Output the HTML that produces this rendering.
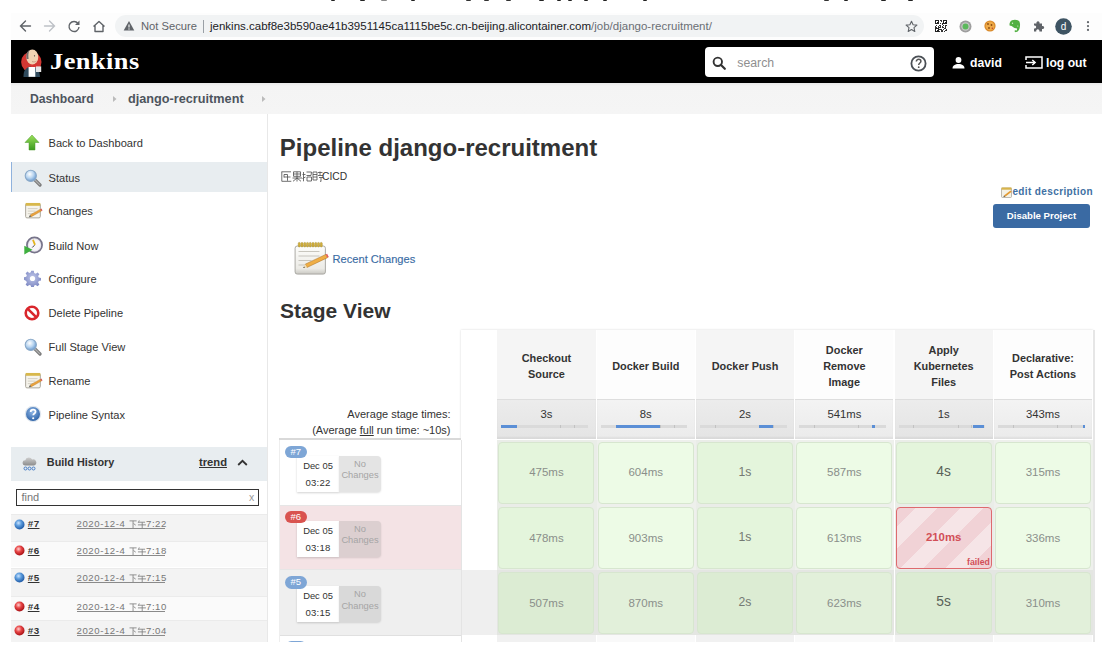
<!DOCTYPE html>
<html><head><meta charset="utf-8">
<style>
*{box-sizing:border-box;margin:0;padding:0}
html,body{width:1110px;height:663px;overflow:hidden;background:#fff;font-family:"Liberation Sans",sans-serif;color:#333}
.a{position:absolute}
.nw{white-space:nowrap}
#chrome{left:11px;top:13px;width:1091px;height:27px;background:#fdfdfd}
#omni{left:115px;top:15px;width:809px;height:22px;border-radius:11px;background:#f1f3f4}
#hdr{left:11px;top:40px;width:1091px;height:43px;background:#000}
#bc{left:11px;top:83px;width:1091px;height:31px;background:linear-gradient(#e9e9e9,#f4f4f4 3px,#f5f5f5)}
#side{left:11px;top:114px;width:257px;height:528px;background:#fff;border-right:1px solid #e8e8e8}
.si{position:absolute;left:11px;width:256px;height:30px;font-size:11px;color:#333}
.si span{position:absolute;left:37px;top:9px;white-space:nowrap}
.si svg{position:absolute;left:14px;top:7px}
</style></head><body>
<!-- top cut-off title marks -->
<div class="a" style="left:330.5px;top:0;width:4px;height:1.3px;background:#222;border-radius:0 0 1px 1px"></div>
<div class="a" style="left:359.5px;top:0;width:5px;height:1.3px;background:#222;border-radius:0 0 1px 1px"></div>
<div class="a" style="left:380.5px;top:0;width:6px;height:1.3px;background:#888;border-radius:0 0 1px 1px"></div>
<div class="a" style="left:411px;top:0;width:4px;height:1.3px;background:#222;border-radius:0 0 1px 1px"></div>
<div class="a" style="left:465.5px;top:0;width:5px;height:1.3px;background:#333;border-radius:0 0 1px 1px"></div>
<div class="a" style="left:483.5px;top:0;width:5px;height:1.3px;background:#333;border-radius:0 0 1px 1px"></div>
<div class="a" style="left:505.5px;top:0;width:5px;height:1.3px;background:#333;border-radius:0 0 1px 1px"></div>
<div class="a" style="left:538.5px;top:0;width:5px;height:1.3px;background:#222;border-radius:0 0 1px 1px"></div>
<div class="a" style="left:557px;top:0;width:4px;height:1.3px;background:#222;border-radius:0 0 1px 1px"></div>
<div class="a" style="left:568px;top:0;width:4px;height:1.3px;background:#222;border-radius:0 0 1px 1px"></div>
<div class="a" style="left:584px;top:0;width:4px;height:1.3px;background:#222;border-radius:0 0 1px 1px"></div>
<div class="a" style="left:603px;top:0;width:4px;height:1.3px;background:#222;border-radius:0 0 1px 1px"></div>
<div class="a" style="left:643px;top:0;width:4px;height:1.3px;background:#222;border-radius:0 0 1px 1px"></div>
<div class="a" style="left:824px;top:0;width:5px;height:1.3px;background:#333;border-radius:0 0 1px 1px"></div>
<div class="a" style="left:844px;top:0;width:4px;height:1.3px;background:#222;border-radius:0 0 1px 1px"></div>
<div class="a" style="left:881px;top:0;width:5px;height:1.3px;background:#222;border-radius:0 0 1px 1px"></div>
<div class="a" style="left:908px;top:0;width:5px;height:1.3px;background:#222;border-radius:0 0 1px 1px"></div>
<!-- browser chrome -->
<div class="a" id="chrome"></div>
<svg class="a" style="left:11px;top:13px" width="110" height="27" viewBox="0 0 110 27">
 <g fill="none" stroke="#5f6368" stroke-width="1.4" stroke-linecap="round">
  <path d="M9.5 13h10M14.5 8l-5 5 5 5"/>
 </g>
 <g fill="none" stroke="#bdc1c6" stroke-width="1.4" stroke-linecap="round">
  <path d="M33.5 13h10M38.5 8l5 5-5 5"/>
 </g>
 <g fill="none" stroke="#5f6368" stroke-width="1.4">
  <path d="M67 10.5A5 5 0 1 0 68 14"/>
 </g>
 <path d="M68.5 7.5v4.5h-4.5z" fill="#5f6368"/>
 <g fill="none" stroke="#5f6368" stroke-width="1.4" stroke-linejoin="round">
  <path d="M82.5 13.5l5.5-5 5.5 5M84 12.5v6h8v-6"/>
 </g>
</svg>
<div class="a" id="omni"></div>
<svg class="a" style="left:123px;top:20px" width="12" height="12" viewBox="0 0 12 12"><path d="M6 1L11.3 10.5H0.7z" fill="#5f6368"/><path d="M6 4.5v3" stroke="#f1f3f4" stroke-width="1.2"/><circle cx="6" cy="9" r="0.7" fill="#f1f3f4"/></svg>
<div class="a nw" style="left:141px;top:19px;font-size:11.2px;color:#5f6368;line-height:14px">Not Secure</div>
<div class="a" style="left:203px;top:20px;width:1px;height:13px;background:#9aa0a6"></div>
<div class="a nw" style="left:210px;top:19px;font-size:11.5px;color:#202124;line-height:14px">jenkins.cabf8e3b590ae41b3951145ca1115be5c.cn-beijing.alicontainer.com<span style="color:#6b6f74">/job/django-recruitment/</span></div>
<svg class="a" style="left:905px;top:20px" width="13" height="13" viewBox="0 0 13 13"><path d="M6.5 1.2l1.6 3.5 3.8.4-2.9 2.6.8 3.8-3.3-1.9-3.3 1.9.8-3.8L1.1 5.1l3.8-.4z" fill="none" stroke="#5f6368" stroke-width="1.1" stroke-linejoin="round"/></svg>
<!-- QR -->
<svg class="a" style="left:935px;top:20px" width="12" height="12" viewBox="0 0 12 12" shape-rendering="crispEdges"><rect width="12" height="12" fill="#fff"/><path d="M0 0h1v1h-1zM1 0h1v1h-1zM2 0h1v1h-1zM5 0h1v1h-1zM6 0h1v1h-1zM8 0h1v1h-1zM9 0h1v1h-1zM11 0h1v1h-1zM1 1h1v1h-1zM3 1h1v1h-1zM6 1h1v1h-1zM9 1h1v1h-1zM0 2h1v1h-1zM1 2h1v1h-1zM3 2h1v1h-1zM8 2h1v1h-1zM10 2h1v1h-1zM1 3h1v1h-1zM2 3h1v1h-1zM3 3h1v1h-1zM5 3h1v1h-1zM7 3h1v1h-1zM8 3h1v1h-1zM9 3h1v1h-1zM10 3h1v1h-1zM7 4h1v1h-1zM1 5h1v1h-1zM4 5h1v1h-1zM5 5h1v1h-1zM8 5h1v1h-1zM10 5h1v1h-1zM11 5h1v1h-1zM0 6h1v1h-1zM3 6h1v1h-1zM5 6h1v1h-1zM7 6h1v1h-1zM10 6h1v1h-1zM0 7h1v1h-1zM1 7h1v1h-1zM3 7h1v1h-1zM4 7h1v1h-1zM5 7h1v1h-1zM7 7h1v1h-1zM8 7h1v1h-1zM10 7h1v1h-1zM1 8h1v1h-1zM2 8h1v1h-1zM3 8h1v1h-1zM9 8h1v1h-1zM10 8h1v1h-1zM0 9h1v1h-1zM1 9h1v1h-1zM3 9h1v1h-1zM4 9h1v1h-1zM5 9h1v1h-1zM6 9h1v1h-1zM8 9h1v1h-1zM11 9h1v1h-1zM1 10h1v1h-1zM3 10h1v1h-1zM6 10h1v1h-1zM7 10h1v1h-1zM10 10h1v1h-1zM11 10h1v1h-1zM1 11h1v1h-1zM2 11h1v1h-1zM3 11h1v1h-1zM4 11h1v1h-1zM6 11h1v1h-1zM7 11h1v1h-1zM9 11h1v1h-1z" fill="#333"/><path d="M0 0h4v4h-4zM8 0h4v4h-4zM0 8h4v4h-4z" fill="#222"/><path d="M1 1h2v2h-2zM9 1h2v2h-2zM1 9h2v2h-2z" fill="#fff"/><path d="M1.5 1.5h1v1h-1zM9.5 1.5h1v1h-1zM1.5 9.5h1v1h-1z" fill="#222"/></svg>
<svg class="a" style="left:959px;top:20px" width="13" height="13" viewBox="0 0 13 13"><circle cx="6.5" cy="6.5" r="6" fill="#9e9e9e"/><circle cx="6.5" cy="6.5" r="4.2" fill="#c8c8c8"/><circle cx="6.5" cy="6.5" r="3" fill="#5cb85c"/></svg>
<svg class="a" style="left:984px;top:20px" width="12" height="12" viewBox="0 0 12 12"><circle cx="6" cy="6" r="5.6" fill="#d98a2b"/><circle cx="6" cy="6" r="4.4" fill="#eeaa48"/><circle cx="4" cy="4" r="0.9" fill="#8a4b12"/><circle cx="7.5" cy="5" r="0.9" fill="#8a4b12"/><circle cx="5" cy="8" r="0.9" fill="#8a4b12"/><circle cx="8.3" cy="8.2" r="0.7" fill="#c0392b"/></svg>
<svg class="a" style="left:1008px;top:19px" width="13" height="14" viewBox="0 0 13 14"><path d="M4 1.2c2.5-1 5.5-.6 7 .8 1.4 1.6 1.2 5 .6 7.2-.5 2-1.8 3.6-3.4 3.9-1.3.2-2-.8-1.4-1.6.6-.7 1.6-.3 1.5.3.8-.6 1-1.8.3-2.5-1.2.2-2.5-.2-3.3-1C3.5 6.8 2.8 6.6 1.8 6.8 1 5 1.8 2.4 4 1.2z" fill="#52b043"/><circle cx="4.5" cy="4.3" r="0.7" fill="#d8f0d0"/><circle cx="9.8" cy="7" r="0.6" fill="#d8f0d0"/></svg>
<svg class="a" style="left:1033px;top:20px" width="12" height="12" viewBox="0 0 12 12"><path d="M1 3.5h2.5a1.6 1.6 0 1 1 3 0H9V6a1.6 1.6 0 1 1 0 3v2.5H6.3a1.6 1.6 0 1 0-3 0H1V8.5a1.6 1.6 0 1 0 0-3z" fill="#5f6368"/></svg>
<svg class="a" style="left:1055px;top:18px" width="17" height="17" viewBox="0 0 17 17"><circle cx="8.5" cy="8.5" r="8.3" fill="#3e5463"/><text x="8.5" y="12" text-anchor="middle" font-family="Liberation Sans" font-size="10" fill="#fff">d</text></svg>
<svg class="a" style="left:1086px;top:20px" width="4" height="13" viewBox="0 0 4 13"><circle cx="2" cy="2.2" r="1.1" fill="#5f6368"/><circle cx="2" cy="6.1" r="1.1" fill="#5f6368"/><circle cx="2" cy="9.9" r="1.1" fill="#5f6368"/></svg>

<!-- Jenkins header -->
<div class="a" id="hdr"></div>
<svg class="a" style="left:19px;top:48px" width="24" height="29" viewBox="0 0 24 29">
 <circle cx="12.3" cy="14" r="10.2" fill="#d33833"/>
 <path d="M4.5 29c0-5 .8-9.5 8-10.5 7 .5 8 5 8.5 10.5z" fill="#2f4a5c"/>
 <path d="M12 16.5l3 2.2 2.6-2.4-.4 3.2-2.4-.6-2.6 1z" fill="#e03a35"/>
 <ellipse cx="13.3" cy="9" rx="6" ry="7.6" fill="#f1d3b3"/>
 <path d="M7.6 11c-.6-4 0-7.6 3-9-1.3 2.5-1.5 5.5-1 9z" fill="#6f6a6b"/>
 <path d="M13 13.5c1.5.7 3.2.6 4.3-.3" stroke="#b88e72" stroke-width="0.7" fill="none"/>
 <circle cx="15.5" cy="7.8" r="0.6" fill="#333"/>
 <path d="M9.6 19h6.7v9.8H9.6z" fill="#fff"/>
 <path d="M17 18.4h5.2v5.6H17z" fill="#e6e6e6"/>
</svg>
<div class="a nw" style="left:50.3px;top:49.5px;font-family:'Liberation Serif',serif;font-weight:bold;font-size:22.5px;line-height:24px;color:#fff;letter-spacing:0.4px;transform:scaleX(1.17);transform-origin:0 0">Jenkins</div>
<div class="a" style="left:705px;top:47px;width:229px;height:30px;background:#fff;border-radius:4px"></div>
<svg class="a" style="left:712px;top:56px" width="15" height="14" viewBox="0 0 15 14"><circle cx="5.8" cy="5.8" r="4.2" fill="none" stroke="#333" stroke-width="1.9"/><path d="M8.8 8.8l4 4" stroke="#333" stroke-width="2.2" stroke-linecap="round"/></svg>
<div class="a nw" style="left:737.3px;top:56px;font-size:12.3px;color:#8f8f8f;line-height:15px">search</div>
<svg class="a" style="left:910px;top:55px" width="17" height="17" viewBox="0 0 17 17"><circle cx="8.5" cy="8.5" r="7.1" fill="none" stroke="#4a4f55" stroke-width="1.8"/><path d="M6.3 6.6c0-1.4 1-2.3 2.3-2.3s2.3.9 2.3 2.1c0 1.6-2.2 1.7-2.2 3.5" fill="none" stroke="#555" stroke-width="1.5"/><circle cx="8.7" cy="12.2" r="0.9" fill="#555"/></svg>
<svg class="a" style="left:952px;top:57px" width="13" height="12" viewBox="0 0 13 12"><circle cx="6.5" cy="3" r="2.9" fill="#fff"/><path d="M0.5 11.5c0-3 2.5-4.6 6-4.6s6 1.6 6 4.6z" fill="#fff"/></svg>
<div class="a nw" style="left:970px;top:56px;font-size:12.2px;font-weight:bold;color:#fff;line-height:15px">david</div>
<svg class="a" style="left:1025px;top:56px" width="18" height="13" viewBox="0 0 18 13"><path d="M1 4V1h16v11H1V9" fill="none" stroke="#fff" stroke-width="1.5"/><path d="M1 6.5h8.5" stroke="#fff" stroke-width="1.5"/><path d="M7.3 4l2.8 2.5-2.8 2.5" fill="none" stroke="#fff" stroke-width="1.5"/></svg>
<div class="a nw" style="left:1046px;top:56px;font-size:12.2px;font-weight:bold;color:#fff;line-height:15px">log out</div>

<!-- breadcrumb -->
<div class="a" id="bc"></div>
<div class="a nw" style="left:30px;top:92px;font-size:12.2px;font-weight:bold;color:#4d545d;line-height:15px">Dashboard</div>
<svg class="a" style="left:113px;top:96px" width="4" height="6"><path d="M0 0l3.5 3L0 6z" fill="#bbb"/></svg>
<div class="a nw" style="left:128px;top:92px;font-size:12.7px;font-weight:bold;color:#4d545d;line-height:15px">django-recruitment</div>
<svg class="a" style="left:262px;top:96px" width="4" height="6"><path d="M0 0l3.5 3L0 6z" fill="#bbb"/></svg>

<!-- sidebar -->
<div class="a" id="side"></div>
<div class="a" style="left:11px;top:162px;width:256px;height:30px;background:#e8edf0;border-left:1.5px solid #8fb2dd"></div>
<div class="a" style="left:24px;top:133.7px;line-height:0"><svg width="16" height="17" viewBox="0 0 16 17"><defs><linearGradient id="ug" x1="0" y1="0" x2="0" y2="1"><stop offset="0" stop-color="#9be05a"/><stop offset="1" stop-color="#3b9a20"/></linearGradient></defs><path d="M8 1L1 8.5h4V16h6V8.5h4z" fill="url(#ug)" stroke="#4c9a2a" stroke-width="0.5"/></svg></div>
<div class="a nw" style="left:48.5px;top:137.4px;font-size:11.1px;line-height:12px;color:#333">Back to Dashboard</div>
<div class="a" style="left:24px;top:168.5px;line-height:0"><svg width="18" height="18" viewBox="0 0 18 18"><defs><radialGradient id="mg1" cx="40%" cy="35%" r="70%"><stop offset="0" stop-color="#ffffff"/><stop offset="0.5" stop-color="#b9d5f0"/><stop offset="1" stop-color="#5b8fc9"/></radialGradient></defs>
<path d="M10.5 10.5l5.5 5.5" stroke="#7a7a7a" stroke-width="3.2" stroke-linecap="round"/><path d="M10.5 10.5l5.2 5.2" stroke="#b0b0b0" stroke-width="1.2" stroke-linecap="round"/>
<circle cx="6.8" cy="6.8" r="5.6" fill="url(#mg1)" stroke="#8aa9c8" stroke-width="1.1"/></svg></div>
<div class="a nw" style="left:48.5px;top:172.2px;font-size:11.1px;line-height:12px;color:#333">Status</div>
<div class="a" style="left:24px;top:201.1px;line-height:0"><svg width="18.5" height="18.5" viewBox="0 0 17 17"><rect x="1.5" y="2.5" width="13.5" height="13" rx="1.2" fill="#f6f4ec" stroke="#a9a59a" stroke-width="0.9"/>
<rect x="1.5" y="1.8" width="13.5" height="2.6" fill="#d8b84c"/><path d="M3.5 7h9M3.5 9.3h7M3.5 11.6h5" stroke="#cfcabd" stroke-width="0.8"/>
<path d="M5.5 12.8l9.5-5.3 1 1.8-9.5 5.3z" fill="#e9a23b" stroke="#a86c1f" stroke-width="0.3"/><path d="M5.5 12.8l-1 2.1 2-.3z" fill="#555"/><path d="M15 7.5l1 1.8 1-.6-1-1.8z" fill="#d9534f"/></svg></div>
<div class="a nw" style="left:48.5px;top:204.8px;font-size:11.1px;line-height:12px;color:#333">Changes</div>
<div class="a" style="left:24px;top:236.1px;line-height:0"><svg width="19" height="19" viewBox="0 0 19 19"><circle cx="10.5" cy="9" r="7.6" fill="#e9e7ef" stroke="#77748a" stroke-width="1.7"/><circle cx="10.5" cy="9" r="5.6" fill="#f7f6fa"/><path d="M10.5 9.2l-2.2 2.3" stroke="#444" stroke-width="1"/><path d="M9 3.8l2 5" stroke="#e3b51e" stroke-width="1.8"/><path d="M0.3 9.8l8.2 4-8.2 4.6z" fill="#3fb03f"/></svg></div>
<div class="a nw" style="left:48.5px;top:239.8px;font-size:11.1px;line-height:12px;color:#333">Build Now</div>
<div class="a" style="left:24px;top:269.5px;line-height:0"><svg width="17" height="17" viewBox="0 0 17 17"><defs><radialGradient id="gg" cx="50%" cy="40%" r="60%"><stop offset="0" stop-color="#c0c7ea"/><stop offset="1" stop-color="#7d88c2"/></radialGradient></defs><path d="M7.2 0.8h2.6l.4 2.2 1.5.7 1.9-1.3 1.8 1.8-1.3 1.9.7 1.5 2.2.4v2.6l-2.2.4-.7 1.5 1.3 1.9-1.8 1.8-1.9-1.3-1.5.7-.4 2.2H7.2l-.4-2.2-1.5-.7-1.9 1.3-1.8-1.8 1.3-1.9-.7-1.5L0 9.8V7.2l2.2-.4.7-1.5-1.3-1.9 1.8-1.8 1.9 1.3 1.5-.7z" fill="url(#gg)"/><circle cx="8.5" cy="8.5" r="2.6" fill="#fff"/></svg></div>
<div class="a nw" style="left:48.5px;top:273.2px;font-size:11.1px;line-height:12px;color:#333">Configure</div>
<div class="a" style="left:24px;top:303.1px;line-height:0"><svg width="16" height="16" viewBox="0 0 16 16" style="margin-top:1.5px"><circle cx="8" cy="8" r="6.3" fill="#fff" stroke="#d9262c" stroke-width="2.6"/><path d="M3.8 3.8l8.4 8.4" stroke="#d9262c" stroke-width="2.6"/></svg></div>
<div class="a nw" style="left:48.5px;top:306.8px;font-size:11.1px;line-height:12px;color:#333">Delete Pipeline</div>
<div class="a" style="left:24px;top:337.5px;line-height:0"><svg width="18" height="18" viewBox="0 0 18 18"><defs><radialGradient id="mg2" cx="40%" cy="35%" r="70%"><stop offset="0" stop-color="#ffffff"/><stop offset="0.5" stop-color="#b9d5f0"/><stop offset="1" stop-color="#5b8fc9"/></radialGradient></defs>
<path d="M10.5 10.5l5.5 5.5" stroke="#7a7a7a" stroke-width="3.2" stroke-linecap="round"/><path d="M10.5 10.5l5.2 5.2" stroke="#b0b0b0" stroke-width="1.2" stroke-linecap="round"/>
<circle cx="6.8" cy="6.8" r="5.6" fill="url(#mg2)" stroke="#8aa9c8" stroke-width="1.1"/></svg></div>
<div class="a nw" style="left:48.5px;top:341.2px;font-size:11.1px;line-height:12px;color:#333">Full Stage View</div>
<div class="a" style="left:24px;top:371.1px;line-height:0"><svg width="18.5" height="18.5" viewBox="0 0 17 17"><rect x="1.5" y="2.5" width="13.5" height="13" rx="1.2" fill="#f6f4ec" stroke="#a9a59a" stroke-width="0.9"/>
<rect x="1.5" y="1.8" width="13.5" height="2.6" fill="#d8b84c"/><path d="M3.5 7h9M3.5 9.3h7M3.5 11.6h5" stroke="#cfcabd" stroke-width="0.8"/>
<path d="M5.5 12.8l9.5-5.3 1 1.8-9.5 5.3z" fill="#e9a23b" stroke="#a86c1f" stroke-width="0.3"/><path d="M5.5 12.8l-1 2.1 2-.3z" fill="#555"/><path d="M15 7.5l1 1.8 1-.6-1-1.8z" fill="#d9534f"/></svg></div>
<div class="a nw" style="left:48.5px;top:374.8px;font-size:11.1px;line-height:12px;color:#333">Rename</div>
<div class="a" style="left:24px;top:405.1px;line-height:0"><svg width="18" height="18" viewBox="0 0 17 17" style="margin-left:-0.5px"><defs><radialGradient id="hg" cx="45%" cy="35%" r="65%"><stop offset="0" stop-color="#8fb6e6"/><stop offset="1" stop-color="#2f64a8"/></radialGradient></defs><circle cx="8.5" cy="8.5" r="7.8" fill="#dfe6ee"/><circle cx="8.5" cy="8.5" r="6.6" fill="url(#hg)"/><path d="M6.3 6.6c0-1.4 1-2.3 2.3-2.3s2.3.9 2.3 2.1c0 1.6-2.2 1.7-2.2 3.3" fill="none" stroke="#fff" stroke-width="1.7"/><circle cx="8.7" cy="12.5" r="1" fill="#fff"/></svg></div>
<div class="a nw" style="left:48.5px;top:408.8px;font-size:11.1px;line-height:12px;color:#333">Pipeline Syntax</div>
<div class="a" style="left:11px;top:447px;width:256px;height:34px;background:#e8edf0"></div>
<svg class="a" style="left:22px;top:456px" width="15" height="15" viewBox="0 0 15 15"><defs><linearGradient id="cg" x1="0" y1="0" x2="0" y2="1"><stop offset="0" stop-color="#d0d0d0"/><stop offset="1" stop-color="#8c8c8c"/></linearGradient></defs><path d="M3 9.5a2.6 2.6 0 0 1 .3-5.2 3.6 3.6 0 0 1 6.8-.8 2.8 2.8 0 0 1 2 6z" fill="url(#cg)"/><g fill="none" stroke="#4a7ec4" stroke-width="1"><circle cx="3.5" cy="12.5" r="1.5"/><circle cx="7.5" cy="12.5" r="1.5"/><circle cx="11.5" cy="12.5" r="1.5"/></g></svg>
<div class="a nw" style="left:46.8px;top:456.3px;font-size:10.85px;font-weight:bold;line-height:12px;color:#333">Build History</div>
<div class="a nw" style="left:199px;top:456.3px;font-size:11.2px;font-weight:bold;line-height:12px;color:#333;text-decoration:underline">trend</div>
<svg class="a" style="left:237px;top:459px" width="11" height="7" viewBox="0 0 11 7"><path d="M1.2 6L5.5 1.8 9.8 6" fill="none" stroke="#333" stroke-width="1.8"/></svg>
<div class="a" style="left:16px;top:488.5px;width:243px;height:17px;border:1.5px solid #333;background:#fff"></div>
<div class="a nw" style="left:21.5px;top:491px;font-size:11px;line-height:12px;color:#777">find</div>
<div class="a nw" style="left:249px;top:490.5px;font-size:10.5px;line-height:12px;color:#999">x</div>
<div class="a" style="left:11px;top:513.7px;width:256px;height:26.9px;background:#f3f3f3;border-top:1px solid #ebebeb"></div>
<svg class="a" style="left:13.5px;top:518.5px" width="11" height="11" viewBox="0 0 11 11"><defs><radialGradient id="b7" cx="40%" cy="35%" r="65%"><stop offset="0" stop-color="#c9e3ff"/><stop offset="0.45" stop-color="#5b9bdc"/><stop offset="1" stop-color="#1f5aa6"/></radialGradient></defs><circle cx="5.5" cy="5.5" r="5" fill="url(#b7)"/></svg>
<div class="a nw" style="left:27.8px;top:518.1px;font-size:9.8px;font-weight:bold;line-height:12px;color:#333;letter-spacing:0.4px;text-decoration:underline">#7</div>
<div class="a nw" style="left:76.6px;top:517.9px;font-size:9.6px;letter-spacing:0.55px;line-height:12px;color:#777">2020-12-4 </div>
<div class="a nw" style="left:146.1px;top:517.9px;font-size:9.6px;letter-spacing:0.5px;line-height:12px;color:#777">7:22</div>
<div class="a" style="left:76.6px;top:528.2px;width:88.6px;height:1px;background:#8a8a8a"></div>
<svg class="a" style="left:127.8px;top:520.2px" width="19" height="8" viewBox="0 0 20 9"><g stroke="#7a7a7a" stroke-width="0.9" fill="none"><path d="M1 1h8M5 1v8.5M5.5 4l2.5 1.8"/><path d="M12 0.5l-1.2 2.8M11.5 2.5h7M10.5 5.5h9M15.3 2.5v7"/></g></svg>
<div class="a" style="left:11px;top:540.6px;width:256px;height:26.9px;background:#fafafa;border-top:1px solid #ebebeb"></div>
<svg class="a" style="left:13.5px;top:545.4px" width="11" height="11" viewBox="0 0 11 11"><defs><radialGradient id="b6" cx="40%" cy="35%" r="65%"><stop offset="0" stop-color="#ffd0d0"/><stop offset="0.45" stop-color="#e84646"/><stop offset="1" stop-color="#a80f14"/></radialGradient></defs><circle cx="5.5" cy="5.5" r="5" fill="url(#b6)"/></svg>
<div class="a nw" style="left:27.8px;top:545.0px;font-size:9.8px;font-weight:bold;line-height:12px;color:#333;letter-spacing:0.4px;text-decoration:underline">#6</div>
<div class="a nw" style="left:76.6px;top:544.8px;font-size:9.6px;letter-spacing:0.55px;line-height:12px;color:#777">2020-12-4 </div>
<div class="a nw" style="left:146.1px;top:544.8px;font-size:9.6px;letter-spacing:0.5px;line-height:12px;color:#777">7:18</div>
<div class="a" style="left:76.6px;top:555.1px;width:88.6px;height:1px;background:#8a8a8a"></div>
<svg class="a" style="left:127.8px;top:547.1px" width="19" height="8" viewBox="0 0 20 9"><g stroke="#7a7a7a" stroke-width="0.9" fill="none"><path d="M1 1h8M5 1v8.5M5.5 4l2.5 1.8"/><path d="M12 0.5l-1.2 2.8M11.5 2.5h7M10.5 5.5h9M15.3 2.5v7"/></g></svg>
<div class="a" style="left:11px;top:567.5px;width:256px;height:28.8px;background:#f3f3f3;border-top:1px solid #ebebeb"></div>
<svg class="a" style="left:13.5px;top:572.3px" width="11" height="11" viewBox="0 0 11 11"><defs><radialGradient id="b5" cx="40%" cy="35%" r="65%"><stop offset="0" stop-color="#c9e3ff"/><stop offset="0.45" stop-color="#5b9bdc"/><stop offset="1" stop-color="#1f5aa6"/></radialGradient></defs><circle cx="5.5" cy="5.5" r="5" fill="url(#b5)"/></svg>
<div class="a nw" style="left:27.8px;top:571.9px;font-size:9.8px;font-weight:bold;line-height:12px;color:#333;letter-spacing:0.4px;text-decoration:underline">#5</div>
<div class="a nw" style="left:76.6px;top:571.7px;font-size:9.6px;letter-spacing:0.55px;line-height:12px;color:#777">2020-12-4 </div>
<div class="a nw" style="left:146.1px;top:571.7px;font-size:9.6px;letter-spacing:0.5px;line-height:12px;color:#777">7:15</div>
<div class="a" style="left:76.6px;top:582.0px;width:88.6px;height:1px;background:#8a8a8a"></div>
<svg class="a" style="left:127.8px;top:574.0px" width="19" height="8" viewBox="0 0 20 9"><g stroke="#7a7a7a" stroke-width="0.9" fill="none"><path d="M1 1h8M5 1v8.5M5.5 4l2.5 1.8"/><path d="M12 0.5l-1.2 2.8M11.5 2.5h7M10.5 5.5h9M15.3 2.5v7"/></g></svg>
<div class="a" style="left:11px;top:596.3px;width:256px;height:24.1px;background:#fafafa;border-top:1px solid #ebebeb"></div>
<svg class="a" style="left:13.5px;top:601.1px" width="11" height="11" viewBox="0 0 11 11"><defs><radialGradient id="b4" cx="40%" cy="35%" r="65%"><stop offset="0" stop-color="#ffd0d0"/><stop offset="0.45" stop-color="#e84646"/><stop offset="1" stop-color="#a80f14"/></radialGradient></defs><circle cx="5.5" cy="5.5" r="5" fill="url(#b4)"/></svg>
<div class="a nw" style="left:27.8px;top:600.7px;font-size:9.8px;font-weight:bold;line-height:12px;color:#333;letter-spacing:0.4px;text-decoration:underline">#4</div>
<div class="a nw" style="left:76.6px;top:600.5px;font-size:9.6px;letter-spacing:0.55px;line-height:12px;color:#777">2020-12-4 </div>
<div class="a nw" style="left:146.1px;top:600.5px;font-size:9.6px;letter-spacing:0.5px;line-height:12px;color:#777">7:10</div>
<div class="a" style="left:76.6px;top:610.8px;width:88.6px;height:1px;background:#8a8a8a"></div>
<svg class="a" style="left:127.8px;top:602.8px" width="19" height="8" viewBox="0 0 20 9"><g stroke="#7a7a7a" stroke-width="0.9" fill="none"><path d="M1 1h8M5 1v8.5M5.5 4l2.5 1.8"/><path d="M12 0.5l-1.2 2.8M11.5 2.5h7M10.5 5.5h9M15.3 2.5v7"/></g></svg>
<div class="a" style="left:11px;top:620.4px;width:256px;height:21.4px;background:#f3f3f3;border-top:1px solid #ebebeb"></div>
<svg class="a" style="left:13.5px;top:625.2px" width="11" height="11" viewBox="0 0 11 11"><defs><radialGradient id="b3" cx="40%" cy="35%" r="65%"><stop offset="0" stop-color="#ffd0d0"/><stop offset="0.45" stop-color="#e84646"/><stop offset="1" stop-color="#a80f14"/></radialGradient></defs><circle cx="5.5" cy="5.5" r="5" fill="url(#b3)"/></svg>
<div class="a nw" style="left:27.8px;top:624.8px;font-size:9.8px;font-weight:bold;line-height:12px;color:#333;letter-spacing:0.4px;text-decoration:underline">#3</div>
<div class="a nw" style="left:76.6px;top:624.6px;font-size:9.6px;letter-spacing:0.55px;line-height:12px;color:#777">2020-12-4 </div>
<div class="a nw" style="left:146.1px;top:624.6px;font-size:9.6px;letter-spacing:0.5px;line-height:12px;color:#777">7:04</div>
<div class="a" style="left:76.6px;top:634.9px;width:88.6px;height:1px;background:#8a8a8a"></div>
<svg class="a" style="left:127.8px;top:626.9px" width="19" height="8" viewBox="0 0 20 9"><g stroke="#7a7a7a" stroke-width="0.9" fill="none"><path d="M1 1h8M5 1v8.5M5.5 4l2.5 1.8"/><path d="M12 0.5l-1.2 2.8M11.5 2.5h7M10.5 5.5h9M15.3 2.5v7"/></g></svg>

<!-- main -->
<div class="a nw" style="left:279.8px;top:133.5px;font-size:24px;font-weight:bold;line-height:28px;color:#333">Pipeline django-recruitment</div>
<svg class="a" style="left:280.5px;top:171px" width="42" height="11" viewBox="0 0 42 11"><g stroke="#555" stroke-width="0.85" fill="none"><path d="M0.5 0.8h9.5M0.8 0.8v9.5h9.5M3 3.5h3.5M3 6h6.5M6.5 3.5v6.3M3 3.5v3"/><path d="M12.5 0.8h7v4.5h-7zM12.5 3h7M16 0.8v9.7M11.5 7h9.5M16 7l-4 3.3M16 7l4 3.3"/><path d="M22.5 1v9.3M21.5 3.5h3M21.5 7.5l3-1.5M25.5 1h5l-.5 3.5h-4.5M26 6h4.5v4h-4.5z"/><path d="M32 1h4v8h-4zM32 3.5h4M32 6h4M37 1.5h4.5M39 0.5v4M37 4.5h5M38 6.5h4M40 6.5v4l-1-.5"/></g></svg>
<div class="a nw" style="left:322px;top:170.5px;font-size:10.3px;line-height:12px;color:#333">CICD</div>
<svg class="a" style="left:1000.5px;top:187px" width="12" height="11" viewBox="0 0 12 11"><rect x="0.5" y="1" width="10" height="9.5" rx="1" fill="#f4f1e6" stroke="#a39e90" stroke-width="0.7"/><rect x="0.5" y="0.5" width="10" height="2.2" fill="#d8b44a"/><path d="M3 8.5l6.5-5 1.2 1.2-6.5 5z" fill="#e39a32"/><path d="M3 8.5l-.6 1.6 1.8-.4z" fill="#444"/></svg>
<div class="a nw" style="left:1012.4px;top:185.5px;font-size:10px;font-weight:bold;line-height:12px;color:#4070a3;letter-spacing:0.38px">edit description</div>
<div class="a" style="left:993px;top:203.5px;width:97px;height:24px;background:#3a6aa3;border-radius:3px"></div>
<div class="a nw" style="left:993px;width:97px;text-align:center;top:209.7px;font-size:9.6px;font-weight:bold;line-height:12px;color:#fff">Disable Project</div>
<svg class="a" style="left:293px;top:241px" width="36" height="35" viewBox="0 0 36 35"><defs><linearGradient id="rcg" x1="0" y1="0" x2="0" y2="1"><stop offset="0" stop-color="#fdfdfb"/><stop offset="0.8" stop-color="#ecebe6"/><stop offset="1" stop-color="#c9c8c2"/></linearGradient></defs><rect x="2.1" y="5" width="30.3" height="28.1" rx="2.2" fill="url(#rcg)" stroke="#a3a29c" stroke-width="0.9"/><rect x="5.20" y="1.4" width="2.1" height="4.6" rx="1" fill="#d4b13c" stroke="#9c8425" stroke-width="0.4"/><rect x="7.95" y="1.4" width="2.1" height="4.6" rx="1" fill="#d4b13c" stroke="#9c8425" stroke-width="0.4"/><rect x="10.70" y="1.4" width="2.1" height="4.6" rx="1" fill="#d4b13c" stroke="#9c8425" stroke-width="0.4"/><rect x="13.45" y="1.4" width="2.1" height="4.6" rx="1" fill="#d4b13c" stroke="#9c8425" stroke-width="0.4"/><rect x="16.20" y="1.4" width="2.1" height="4.6" rx="1" fill="#d4b13c" stroke="#9c8425" stroke-width="0.4"/><rect x="18.95" y="1.4" width="2.1" height="4.6" rx="1" fill="#d4b13c" stroke="#9c8425" stroke-width="0.4"/><rect x="21.70" y="1.4" width="2.1" height="4.6" rx="1" fill="#d4b13c" stroke="#9c8425" stroke-width="0.4"/><rect x="24.45" y="1.4" width="2.1" height="4.6" rx="1" fill="#d4b13c" stroke="#9c8425" stroke-width="0.4"/><rect x="27.20" y="1.4" width="2.1" height="4.6" rx="1" fill="#d4b13c" stroke="#9c8425" stroke-width="0.4"/><path d="M5.5 10.5h21M5.5 15h21M5.5 19.5h13M5.5 24h10" stroke="#c2c0b8" stroke-width="0.9"/><path d="M12.2 23.2l20.6-9.8 1.7 3.3-20.6 9.8z" fill="#efae45" stroke="#a86c1f" stroke-width="0.5"/><path d="M12.2 23.2l-2 3.9 4 -.6z" fill="#f2ddb0"/><path d="M10.2 27.1l.8-1.5 1 .9z" fill="#333"/><path d="M32.8 13.4l1.7 3.3 1.3-.7-1.7-3.3z" fill="#e25b5b"/></svg>
<div class="a nw" style="left:332.6px;top:253.1px;font-size:11.1px;line-height:12px;color:#3a6ca4;-webkit-text-stroke:0.15px #3a6ca4">Recent Changes</div>
<div class="a nw" style="left:280px;top:299.3px;font-size:21px;font-weight:bold;line-height:24px;color:#333">Stage View</div>
<div class="a" style="left:461.4px;top:330.0px;width:632.0px;height:312.7px;box-shadow:0 0 2px rgba(0,0,0,0.16);background:#fff"></div>
<div class="a" style="left:1093.0px;top:330.3px;width:2px;height:311.7px;background:#e6e6e6"></div>
<div class="a" style="left:279.3px;top:439.5px;width:181.7px;height:202.5px;background:#fff;border-left:1px solid #eee"></div>
<div class="a" style="left:279.3px;top:438.0px;width:181.7px;height:2px;background:#d9d9d9"></div>
<div class="a nw" style="left:300px;width:150.5px;text-align:right;top:408.1px;font-size:11px;line-height:12px;color:#333">Average stage times:</div>
<div class="a nw" style="left:300px;width:150.5px;text-align:right;top:424.4px;font-size:11px;line-height:12px;color:#333">(Average <u>full</u> run time: ~10s)</div>
<div class="a" style="left:497.3px;top:330.3px;width:98.3px;height:69.09999999999997px;background:#f5f5f5"></div>
<div class="a nw" style="left:497.3px;width:98.3px;text-align:center;top:351.9px;font-size:10.9px;font-weight:bold;line-height:12px;color:#333">Checkout</div>
<div class="a nw" style="left:497.3px;width:98.3px;text-align:center;top:368.1px;font-size:10.9px;font-weight:bold;line-height:12px;color:#333">Source</div>
<div class="a" style="left:497.3px;top:399.4px;width:98.3px;height:40.1px;background:linear-gradient(#ececec,#e4e4e4);border-top:1px solid #dedede;box-shadow:inset 0 -2px 2px rgba(0,0,0,0.05)"></div>
<div class="a nw" style="left:497.3px;width:98.3px;text-align:center;top:407.5px;font-size:11.3px;line-height:13px;color:#333">3s</div>
<div class="a" style="left:501.5px;top:425.3px;width:86.5px;height:3px;background:#dadada"></div>
<div class="a" style="left:516.2px;top:425.3px;width:1px;height:3px;background:#c2c2c2"></div>
<div class="a" style="left:560.3px;top:425.3px;width:1px;height:3px;background:#c2c2c2"></div>
<div class="a" style="left:574.2px;top:425.3px;width:1px;height:3px;background:#c2c2c2"></div>
<div class="a" style="left:501.4px;top:425px;width:15.5px;height:3.3px;background:#5b8fd6"></div>
<div class="a" style="left:596.6px;top:330.3px;width:98.3px;height:69.09999999999997px;background:#fdfdfd"></div>
<div class="a nw" style="left:596.6px;width:98.3px;text-align:center;top:360.0px;font-size:10.9px;font-weight:bold;line-height:12px;color:#333">Docker Build</div>
<div class="a" style="left:596.6px;top:399.4px;width:98.3px;height:40.1px;background:linear-gradient(#f3f3f3,#ebebeb);border-top:1px solid #dedede;box-shadow:inset 0 -2px 2px rgba(0,0,0,0.05)"></div>
<div class="a nw" style="left:596.6px;width:98.3px;text-align:center;top:407.5px;font-size:11.3px;line-height:13px;color:#333">8s</div>
<div class="a" style="left:600.8px;top:425.3px;width:86.5px;height:3px;background:#dadada"></div>
<div class="a" style="left:615.5px;top:425.3px;width:1px;height:3px;background:#c2c2c2"></div>
<div class="a" style="left:659.6px;top:425.3px;width:1px;height:3px;background:#c2c2c2"></div>
<div class="a" style="left:673.5px;top:425.3px;width:1px;height:3px;background:#c2c2c2"></div>
<div class="a" style="left:615.7px;top:425px;width:44.7px;height:3.3px;background:#5b8fd6"></div>
<div class="a" style="left:695.9px;top:330.3px;width:98.3px;height:69.09999999999997px;background:#f5f5f5"></div>
<div class="a nw" style="left:695.9px;width:98.3px;text-align:center;top:360.0px;font-size:10.9px;font-weight:bold;line-height:12px;color:#333">Docker Push</div>
<div class="a" style="left:695.9px;top:399.4px;width:98.3px;height:40.1px;background:linear-gradient(#ececec,#e4e4e4);border-top:1px solid #dedede;box-shadow:inset 0 -2px 2px rgba(0,0,0,0.05)"></div>
<div class="a nw" style="left:695.9px;width:98.3px;text-align:center;top:407.5px;font-size:11.3px;line-height:13px;color:#333">2s</div>
<div class="a" style="left:700.1px;top:425.3px;width:86.5px;height:3px;background:#dadada"></div>
<div class="a" style="left:714.8px;top:425.3px;width:1px;height:3px;background:#c2c2c2"></div>
<div class="a" style="left:758.9px;top:425.3px;width:1px;height:3px;background:#c2c2c2"></div>
<div class="a" style="left:772.8px;top:425.3px;width:1px;height:3px;background:#c2c2c2"></div>
<div class="a" style="left:759.0px;top:425px;width:14.0px;height:3.3px;background:#5b8fd6"></div>
<div class="a" style="left:795.2px;top:330.3px;width:98.3px;height:69.09999999999997px;background:#fdfdfd"></div>
<div class="a nw" style="left:795.2px;width:98.3px;text-align:center;top:343.8px;font-size:10.9px;font-weight:bold;line-height:12px;color:#333">Docker</div>
<div class="a nw" style="left:795.2px;width:98.3px;text-align:center;top:360.0px;font-size:10.9px;font-weight:bold;line-height:12px;color:#333">Remove</div>
<div class="a nw" style="left:795.2px;width:98.3px;text-align:center;top:376.2px;font-size:10.9px;font-weight:bold;line-height:12px;color:#333">Image</div>
<div class="a" style="left:795.2px;top:399.4px;width:98.3px;height:40.1px;background:linear-gradient(#f3f3f3,#ebebeb);border-top:1px solid #dedede;box-shadow:inset 0 -2px 2px rgba(0,0,0,0.05)"></div>
<div class="a nw" style="left:795.2px;width:98.3px;text-align:center;top:407.5px;font-size:11.3px;line-height:13px;color:#333">541ms</div>
<div class="a" style="left:799.4px;top:425.3px;width:86.5px;height:3px;background:#dadada"></div>
<div class="a" style="left:814.1px;top:425.3px;width:1px;height:3px;background:#c2c2c2"></div>
<div class="a" style="left:858.2px;top:425.3px;width:1px;height:3px;background:#c2c2c2"></div>
<div class="a" style="left:872.1px;top:425.3px;width:1px;height:3px;background:#c2c2c2"></div>
<div class="a" style="left:872.0px;top:425px;width:2.5px;height:3.3px;background:#5b8fd6"></div>
<div class="a" style="left:894.5px;top:330.3px;width:98.3px;height:69.09999999999997px;background:#f5f5f5"></div>
<div class="a nw" style="left:894.5px;width:98.3px;text-align:center;top:343.8px;font-size:10.9px;font-weight:bold;line-height:12px;color:#333">Apply</div>
<div class="a nw" style="left:894.5px;width:98.3px;text-align:center;top:360.0px;font-size:10.9px;font-weight:bold;line-height:12px;color:#333">Kubernetes</div>
<div class="a nw" style="left:894.5px;width:98.3px;text-align:center;top:376.2px;font-size:10.9px;font-weight:bold;line-height:12px;color:#333">Files</div>
<div class="a" style="left:894.5px;top:399.4px;width:98.3px;height:40.1px;background:linear-gradient(#ececec,#e4e4e4);border-top:1px solid #dedede;box-shadow:inset 0 -2px 2px rgba(0,0,0,0.05)"></div>
<div class="a nw" style="left:894.5px;width:98.3px;text-align:center;top:407.5px;font-size:11.3px;line-height:13px;color:#333">1s</div>
<div class="a" style="left:898.7px;top:425.3px;width:86.5px;height:3px;background:#dadada"></div>
<div class="a" style="left:913.4px;top:425.3px;width:1px;height:3px;background:#c2c2c2"></div>
<div class="a" style="left:957.5px;top:425.3px;width:1px;height:3px;background:#c2c2c2"></div>
<div class="a" style="left:971.4px;top:425.3px;width:1px;height:3px;background:#c2c2c2"></div>
<div class="a" style="left:972.6px;top:425px;width:11.8px;height:3.3px;background:#5b8fd6"></div>
<div class="a" style="left:993.8px;top:330.3px;width:98.3px;height:69.09999999999997px;background:#fdfdfd"></div>
<div class="a nw" style="left:993.8px;width:98.3px;text-align:center;top:351.9px;font-size:10.9px;font-weight:bold;line-height:12px;color:#333">Declarative:</div>
<div class="a nw" style="left:993.8px;width:98.3px;text-align:center;top:368.1px;font-size:10.9px;font-weight:bold;line-height:12px;color:#333">Post Actions</div>
<div class="a" style="left:993.8px;top:399.4px;width:98.3px;height:40.1px;background:linear-gradient(#f3f3f3,#ebebeb);border-top:1px solid #dedede;box-shadow:inset 0 -2px 2px rgba(0,0,0,0.05)"></div>
<div class="a nw" style="left:993.8px;width:98.3px;text-align:center;top:407.5px;font-size:11.3px;line-height:13px;color:#333">343ms</div>
<div class="a" style="left:998.0px;top:425.3px;width:86.5px;height:3px;background:#dadada"></div>
<div class="a" style="left:1012.7px;top:425.3px;width:1px;height:3px;background:#c2c2c2"></div>
<div class="a" style="left:1056.8px;top:425.3px;width:1px;height:3px;background:#c2c2c2"></div>
<div class="a" style="left:1070.7px;top:425.3px;width:1px;height:3px;background:#c2c2c2"></div>
<div class="a" style="left:1083.0px;top:425px;width:1.6px;height:3.3px;background:#5b8fd6"></div>
<div class="a" style="left:280.3px;top:440.5px;width:180.7px;height:64.4px;background:#fff"></div>
<div class="a" style="left:461.0px;top:439.5px;width:36.3px;height:65.4px;background:#fff"></div>
<div class="a" style="left:297px;top:455.5px;width:42px;height:36px;background:#fff;box-shadow:0 1px 2px rgba(0,0,0,0.18)"></div>
<div class="a" style="left:339px;top:455.5px;width:42px;height:36px;background:#e4e4e4;border-radius:0 4px 4px 0;box-shadow:0 1px 2px rgba(0,0,0,0.12)"></div>
<div class="a nw" style="left:297px;width:42px;text-align:center;top:459.7px;font-size:9.4px;line-height:12px;color:#333">Dec 05</div>
<div class="a nw" style="left:297px;width:42px;text-align:center;top:476.7px;font-size:9.6px;letter-spacing:0.2px;line-height:12px;color:#333">03:22</div>
<div class="a nw" style="left:339px;width:42px;text-align:center;top:458.5px;font-size:9.3px;line-height:11px;color:#a5a5a5">No</div>
<div class="a nw" style="left:339px;width:42px;text-align:center;top:470.0px;font-size:9.3px;line-height:11px;color:#a5a5a5">Changes</div>
<div class="a nw" style="left:285px;top:445.5px;width:21.5px;height:12.5px;border-radius:6.5px;background:#7ea6d6;text-align:center;font-size:9.5px;line-height:12.5px;color:#fff">#7</div>
<div class="a" style="left:497.3px;top:439.5px;width:99.3px;height:65.4px;background:#eaede8"></div>
<div class="a" style="left:498.3px;top:441.8px;width:96.0px;height:62.1px;border:1px solid #d7e6cf;border-radius:4px;background:#e4f5dc"></div>
<div class="a nw" style="left:497.3px;width:98.3px;text-align:center;top:466.2px;font-size:11.5px;line-height:13.8px;color:#8a8f8a">475ms</div>
<div class="a" style="left:596.6px;top:439.5px;width:99.3px;height:65.4px;background:#eef0ec"></div>
<div class="a" style="left:597.6px;top:441.8px;width:96.0px;height:62.1px;border:1px solid #d7e6cf;border-radius:4px;background:#edfbe6"></div>
<div class="a nw" style="left:596.6px;width:98.3px;text-align:center;top:466.2px;font-size:11.5px;line-height:13.8px;color:#8a8f8a">604ms</div>
<div class="a" style="left:695.9px;top:439.5px;width:99.3px;height:65.4px;background:#eaede8"></div>
<div class="a" style="left:696.9px;top:441.8px;width:96.0px;height:62.1px;border:1px solid #d7e6cf;border-radius:4px;background:#e4f5dc"></div>
<div class="a nw" style="left:695.9px;width:98.3px;text-align:center;top:464.8px;font-size:12.2px;line-height:14.6px;color:#747a73">1s</div>
<div class="a" style="left:795.2px;top:439.5px;width:99.3px;height:65.4px;background:#eef0ec"></div>
<div class="a" style="left:796.2px;top:441.8px;width:96.0px;height:62.1px;border:1px solid #d7e6cf;border-radius:4px;background:#edfbe6"></div>
<div class="a nw" style="left:795.2px;width:98.3px;text-align:center;top:466.2px;font-size:11.5px;line-height:13.8px;color:#8a8f8a">587ms</div>
<div class="a" style="left:894.5px;top:439.5px;width:99.3px;height:65.4px;background:#eaede8"></div>
<div class="a" style="left:895.5px;top:441.8px;width:96.0px;height:62.1px;border:1px solid #d7e6cf;border-radius:4px;background:#e4f5dc"></div>
<div class="a nw" style="left:894.5px;width:98.3px;text-align:center;top:463.8px;font-size:13.8px;line-height:16.6px;color:#5a6259">4s</div>
<div class="a" style="left:993.8px;top:439.5px;width:99.3px;height:65.4px;background:#eef0ec"></div>
<div class="a" style="left:994.8px;top:441.8px;width:96.0px;height:62.1px;border:1px solid #d7e6cf;border-radius:4px;background:#edfbe6"></div>
<div class="a nw" style="left:993.8px;width:98.3px;text-align:center;top:466.2px;font-size:11.5px;line-height:13.8px;color:#8a8f8a">315ms</div>
<div class="a" style="left:280.3px;top:505.9px;width:180.7px;height:62.9px;background:#f4e3e5"></div>
<div class="a" style="left:280.3px;top:504.9px;width:180.7px;height:1px;background:#e6e6e6"></div>
<div class="a" style="left:461.0px;top:504.9px;width:36.3px;height:65.1px;background:#fff"></div>
<div class="a" style="left:297px;top:520.9px;width:42px;height:36px;background:#fff;box-shadow:0 1px 2px rgba(0,0,0,0.18)"></div>
<div class="a" style="left:339px;top:520.9px;width:42px;height:36px;background:#dccfd0;border-radius:0 4px 4px 0;box-shadow:0 1px 2px rgba(0,0,0,0.12)"></div>
<div class="a nw" style="left:297px;width:42px;text-align:center;top:525.1px;font-size:9.4px;line-height:12px;color:#333">Dec 05</div>
<div class="a nw" style="left:297px;width:42px;text-align:center;top:542.1px;font-size:9.6px;letter-spacing:0.2px;line-height:12px;color:#333">03:18</div>
<div class="a nw" style="left:339px;width:42px;text-align:center;top:523.9px;font-size:9.3px;line-height:11px;color:#a5a5a5">No</div>
<div class="a nw" style="left:339px;width:42px;text-align:center;top:535.4px;font-size:9.3px;line-height:11px;color:#a5a5a5">Changes</div>
<div class="a nw" style="left:285px;top:510.9px;width:21.5px;height:12.5px;border-radius:6.5px;background:#d9534f;text-align:center;font-size:9.5px;line-height:12.5px;color:#fff">#6</div>
<div class="a" style="left:497.3px;top:504.9px;width:99.3px;height:65.1px;background:#eaede8"></div>
<div class="a" style="left:498.3px;top:507.2px;width:96.0px;height:61.8px;border:1px solid #d7e6cf;border-radius:4px;background:#e4f5dc"></div>
<div class="a nw" style="left:497.3px;width:98.3px;text-align:center;top:531.6px;font-size:11.5px;line-height:13.8px;color:#8a8f8a">478ms</div>
<div class="a" style="left:596.6px;top:504.9px;width:99.3px;height:65.1px;background:#eef0ec"></div>
<div class="a" style="left:597.6px;top:507.2px;width:96.0px;height:61.8px;border:1px solid #d7e6cf;border-radius:4px;background:#edfbe6"></div>
<div class="a nw" style="left:596.6px;width:98.3px;text-align:center;top:531.6px;font-size:11.5px;line-height:13.8px;color:#8a8f8a">903ms</div>
<div class="a" style="left:695.9px;top:504.9px;width:99.3px;height:65.1px;background:#eaede8"></div>
<div class="a" style="left:696.9px;top:507.2px;width:96.0px;height:61.8px;border:1px solid #d7e6cf;border-radius:4px;background:#e4f5dc"></div>
<div class="a nw" style="left:695.9px;width:98.3px;text-align:center;top:530.2px;font-size:12.2px;line-height:14.6px;color:#747a73">1s</div>
<div class="a" style="left:795.2px;top:504.9px;width:99.3px;height:65.1px;background:#eef0ec"></div>
<div class="a" style="left:796.2px;top:507.2px;width:96.0px;height:61.8px;border:1px solid #d7e6cf;border-radius:4px;background:#edfbe6"></div>
<div class="a nw" style="left:795.2px;width:98.3px;text-align:center;top:531.6px;font-size:11.5px;line-height:13.8px;color:#8a8f8a">613ms</div>
<div class="a" style="left:894.5px;top:504.9px;width:99.3px;height:65.1px;background:#eaede8"></div>
<div class="a" style="left:895.5px;top:507.4px;width:96.0px;height:61.6px;border:1.5px solid #de6a6e;border-radius:4px;background:repeating-linear-gradient(-45deg,#f1d2d6 0 16px,#f6e5e7 16px 32px)"></div>
<div class="a nw" style="left:894.5px;width:98.3px;text-align:center;top:530.9px;font-size:11.4px;font-weight:bold;line-height:13px;color:#d24f57">210ms</div>
<div class="a nw" style="left:894.5px;width:95.3px;text-align:right;top:556.9px;font-size:8.7px;font-weight:bold;line-height:10px;color:#d24f57">failed</div>
<div class="a" style="left:993.8px;top:504.9px;width:99.3px;height:65.1px;background:#eef0ec"></div>
<div class="a" style="left:994.8px;top:507.2px;width:96.0px;height:61.8px;border:1px solid #d7e6cf;border-radius:4px;background:#edfbe6"></div>
<div class="a nw" style="left:993.8px;width:98.3px;text-align:center;top:531.6px;font-size:11.5px;line-height:13.8px;color:#8a8f8a">336ms</div>
<div class="a" style="left:280.3px;top:569.8px;width:180.7px;height:64.8px;background:#efefef"></div>
<div class="a" style="left:280.3px;top:568.8px;width:180.7px;height:1px;background:#e6e6e6"></div>
<div class="a" style="left:461.0px;top:570.0px;width:36.3px;height:65.0px;background:#efefef"></div>
<div class="a" style="left:297px;top:586.0px;width:42px;height:36px;background:#fff;box-shadow:0 1px 2px rgba(0,0,0,0.18)"></div>
<div class="a" style="left:339px;top:586.0px;width:42px;height:36px;background:#d9d9d9;border-radius:0 4px 4px 0;box-shadow:0 1px 2px rgba(0,0,0,0.12)"></div>
<div class="a nw" style="left:297px;width:42px;text-align:center;top:590.2px;font-size:9.4px;line-height:12px;color:#333">Dec 05</div>
<div class="a nw" style="left:297px;width:42px;text-align:center;top:607.2px;font-size:9.6px;letter-spacing:0.2px;line-height:12px;color:#333">03:15</div>
<div class="a nw" style="left:339px;width:42px;text-align:center;top:589.0px;font-size:9.3px;line-height:11px;color:#a5a5a5">No</div>
<div class="a nw" style="left:339px;width:42px;text-align:center;top:600.5px;font-size:9.3px;line-height:11px;color:#a5a5a5">Changes</div>
<div class="a nw" style="left:285px;top:576.0px;width:21.5px;height:12.5px;border-radius:6.5px;background:#7ea6d6;text-align:center;font-size:9.5px;line-height:12.5px;color:#fff">#5</div>
<div class="a" style="left:497.3px;top:570.0px;width:99.3px;height:65.0px;background:#e4e6e2"></div>
<div class="a" style="left:498.3px;top:572.3px;width:96.0px;height:61.7px;border:1px solid #d7e6cf;border-radius:4px;background:#dcecd3"></div>
<div class="a nw" style="left:497.3px;width:98.3px;text-align:center;top:596.7px;font-size:11.5px;line-height:13.8px;color:#8a8f8a">507ms</div>
<div class="a" style="left:596.6px;top:570.0px;width:99.3px;height:65.0px;background:#e4e6e2"></div>
<div class="a" style="left:597.6px;top:572.3px;width:96.0px;height:61.7px;border:1px solid #d7e6cf;border-radius:4px;background:#e2f0da"></div>
<div class="a nw" style="left:596.6px;width:98.3px;text-align:center;top:596.7px;font-size:11.5px;line-height:13.8px;color:#8a8f8a">870ms</div>
<div class="a" style="left:695.9px;top:570.0px;width:99.3px;height:65.0px;background:#e4e6e2"></div>
<div class="a" style="left:696.9px;top:572.3px;width:96.0px;height:61.7px;border:1px solid #d7e6cf;border-radius:4px;background:#dcecd3"></div>
<div class="a nw" style="left:695.9px;width:98.3px;text-align:center;top:595.3px;font-size:12.2px;line-height:14.6px;color:#747a73">2s</div>
<div class="a" style="left:795.2px;top:570.0px;width:99.3px;height:65.0px;background:#e4e6e2"></div>
<div class="a" style="left:796.2px;top:572.3px;width:96.0px;height:61.7px;border:1px solid #d7e6cf;border-radius:4px;background:#e2f0da"></div>
<div class="a nw" style="left:795.2px;width:98.3px;text-align:center;top:596.7px;font-size:11.5px;line-height:13.8px;color:#8a8f8a">623ms</div>
<div class="a" style="left:894.5px;top:570.0px;width:99.3px;height:65.0px;background:#e4e6e2"></div>
<div class="a" style="left:895.5px;top:572.3px;width:96.0px;height:61.7px;border:1px solid #d7e6cf;border-radius:4px;background:#dcecd3"></div>
<div class="a nw" style="left:894.5px;width:98.3px;text-align:center;top:594.3px;font-size:13.8px;line-height:16.6px;color:#5a6259">5s</div>
<div class="a" style="left:993.8px;top:570.0px;width:99.3px;height:65.0px;background:#e4e6e2"></div>
<div class="a" style="left:994.8px;top:572.3px;width:96.0px;height:61.7px;border:1px solid #d7e6cf;border-radius:4px;background:#e2f0da"></div>
<div class="a nw" style="left:993.8px;width:98.3px;text-align:center;top:596.7px;font-size:11.5px;line-height:13.8px;color:#8a8f8a">310ms</div>
<div class="a" style="left:280.3px;top:634.6px;width:180.7px;height:1px;background:#e0e0e0"></div>
<div class="a" style="left:285px;top:641.0px;width:21.5px;height:12.5px;border-radius:6.5px;background:#7ea6d6"></div>
<div class="a" style="left:497.3px;top:635.0px;width:98.3px;height:10px;background:#f1f1f1"></div>
<div class="a" style="left:596.6px;top:635.0px;width:98.3px;height:10px;background:#f9f9f9"></div>
<div class="a" style="left:695.9px;top:635.0px;width:98.3px;height:10px;background:#f1f1f1"></div>
<div class="a" style="left:795.2px;top:635.0px;width:98.3px;height:10px;background:#f9f9f9"></div>
<div class="a" style="left:894.5px;top:635.0px;width:98.3px;height:10px;background:#f1f1f1"></div>
<div class="a" style="left:993.8px;top:635.0px;width:98.3px;height:10px;background:#f9f9f9"></div>
<div class="a" style="left:460.6px;top:439.5px;width:1px;height:202.5px;background:#e4e4e4"></div>
<div class="a" style="left:0;top:641.8px;width:1110px;height:22px;background:#fff"></div>
</body></html>
